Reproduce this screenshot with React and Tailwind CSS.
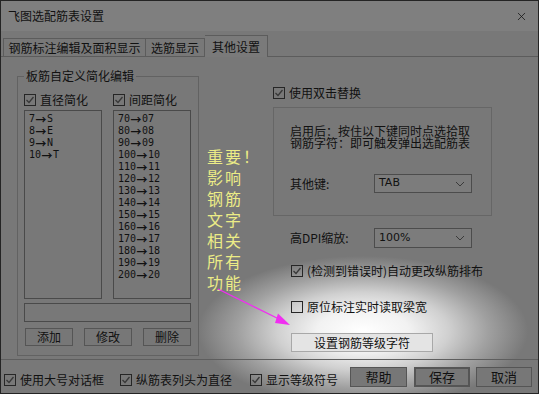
import { X } from "lucide-react";

const diaItems = [
  ["7", "S"],
  ["8", "E"],
  ["9", "N"],
  ["10", "T"],
];

const spaceItems = [
  ["70", "07"],
  ["80", "08"],
  ["90", "09"],
  ["100", "10"],
  ["110", "11"],
  ["120", "12"],
  ["130", "13"],
  ["140", "14"],
  ["150", "15"],
  ["160", "16"],
  ["170", "17"],
  ["180", "18"],
  ["190", "19"],
  ["200", "20"],
];

const hint = ["重要！", "影响", "钢筋", "文字", "相关", "所有", "功能"];

function Check({ checked = true, label, className = "" }) {
  return (
    <div className={`flex h-[14px] items-center gap-[4px] ${className}`}>
      <span className="flex h-[12px] w-[12px] shrink-0 items-center justify-center border border-[#262626]">
        {checked ? (
          <svg width="10" height="10" viewBox="0 0 10 10">
            <path d="M1.5 5 L4 7.5 L8.5 2" fill="none" stroke="#383838" strokeWidth="1.3" />
          </svg>
        ) : null}
      </span>
      <span className="whitespace-nowrap leading-[14px]">{label}</span>
    </div>
  );
}

function ListBox({ items }) {
  return (
    <div className="mt-[3px] h-[189px] border border-[#4a4a4a] pl-[4px] pt-[2px]">
      {items.map(([a, b]) => (
        <div
          key={a}
          className="flex h-[12px] items-center font-['DejaVu_Sans_Mono',monospace] text-[10px] leading-[12px]"
        >
          <span>{a}</span>
          <span className="w-[12px] text-center font-['Noto_Sans_CJK_SC',sans-serif] text-[11px] font-bold leading-[12px]">
            →
          </span>
          <span>{b}</span>
        </div>
      ))}
    </div>
  );
}

function Select({ value }) {
  return (
    <div className="flex h-full w-[98px] items-center justify-between border border-[#4c4c4c] bg-[#7c7c7c] pl-[4px] pr-[6px]">
      <span className="font-['DejaVu_Sans',sans-serif] text-[11px]">{value}</span>
      <svg width="10" height="6" viewBox="0 0 10 6">
        <path d="M1 1 L5 5 L9 1" fill="none" stroke="#3a3a3a" strokeWidth="1" />
      </svg>
    </div>
  );
}

function Btn({ children, className = "" }) {
  return (
    <div
      className={`flex items-center justify-center border border-[#555] bg-[#777] leading-none ${className}`}
    >
      {children}
    </div>
  );
}

export default function App() {
  return (
    <div className="relative flex h-[394px] w-[539px] flex-col overflow-hidden border border-[#242424] bg-[#787878] bg-[radial-gradient(ellipse_165px_75px_at_362px_330px,#ffffff_0%,#f2f2f2_28%,#d0d0d0_52%,#a0a0a0_76%,#787878_100%)] font-['Noto_Sans_CJK_SC',sans-serif] text-[12px] text-[#111]">
      <div className="flex h-[30px] items-center justify-between bg-[#7f7f7f] pl-[7px] pr-[10px]">
        <span>飞图选配筋表设置</span>
        <X size={13} strokeWidth={1.4} color="#111" />
      </div>

      <div className="flex h-[26px] items-end border-b border-[#5c5c5c] pl-[2px]">
        <div className="flex h-[18px] w-[143px] items-center justify-center border-l border-r border-t border-[#5c5c5c]">
          钢筋标注编辑及面积显示
        </div>
        <div className="flex h-[18px] w-[59px] items-center justify-center border-r border-t border-[#5c5c5c]">
          选筋显示
        </div>
        <div className="relative -mb-px flex h-[22px] w-[63px] items-center justify-center border-r border-t border-[#5c5c5c] bg-[#7a7a7a]">
          其他设置
        </div>
      </div>

      <div className="flex h-[303px] items-start border-b border-[#5e5e5e] pl-[16px] pt-[12px]">
        <fieldset className="h-[287px] w-[182px] border border-[#626262]">
          <legend className="ml-[6px] px-[2px] leading-[14px]">板筋自定义简化编辑</legend>
          <div className="mt-[10px] pl-[6px]">
            <div className="flex gap-[11px]">
              <div className="w-[78px]">
                <Check label="直径简化" />
                <ListBox items={diaItems} />
              </div>
              <div className="w-[78px]">
                <Check label="间距简化" />
                <ListBox items={spaceItems} />
              </div>
            </div>
            <div className="mt-[4px] h-[19px] w-[167px] border border-[#4a4a4a]" />
            <div className="mt-[6px] flex gap-[11px] pl-px">
              <Btn className="h-[18px] w-[48px]">添加</Btn>
              <Btn className="h-[18px] w-[48px]">修改</Btn>
              <Btn className="h-[18px] w-[48px]">删除</Btn>
            </div>
          </div>
        </fieldset>

        <div className="ml-[8px] mt-[77px] w-[66px] text-[16px] leading-[21px] tracking-[2px] text-[#ecec86]">
          {hint.map((line) => (
            <div key={line}>{line}</div>
          ))}
        </div>

        <div className="mt-[17px] w-[219px]">
          <Check label="使用双击替换" />
          <div className="mt-[7px] h-[109px] border border-[#666] pl-[16px] pt-[17px]">
            <div className="whitespace-nowrap leading-[12px]">
              <div>启用后：按住以下键同时点选拾取</div>
              <div>钢筋字符：即可触发弹出选配筋表</div>
            </div>
            <div className="mt-[25px] flex h-[19px] items-center">
              <span className="w-[84px]">其他键:</span>
              <Select value="TAB" />
            </div>
          </div>
          <div className="mt-[12px] flex h-[20px] items-center pl-[17px]">
            <span className="w-[84px]">高DPI缩放:</span>
            <Select value="100%" />
          </div>
          <Check className="ml-[18px] mt-[16px]" label="(检测到错误时)自动更改纵筋排布" />
          <Check className="ml-[18px] mt-[22px]" checked={false} label="原位标注实时读取梁宽" />
          <div className="ml-[18px] mt-[19px] flex h-[19px] w-[142px] items-center justify-center border border-[#a8a8a8] bg-[#e4e4e4]">
            设置钢筋等级字符
          </div>
        </div>
      </div>

      <div className="flex h-[33px] items-center pl-[3px] pr-[6px]">
        <Check className="mt-[6px] w-[116px]" label="使用大号对话框" />
        <Check className="mt-[6px] w-[130px]" label="纵筋表列头为直径" />
        <Check className="mt-[6px]" label="显示等级符号" />
        <div className="ml-auto flex items-center gap-[7px]">
          <Btn className="h-[20px] w-[57px] text-[13px]">帮助</Btn>
          <Btn className="h-[20px] w-[56px] border-2 border-[#1c4a73] text-[13px]">保存</Btn>
          <Btn className="-ml-px h-[20px] w-[56px] text-[13px]">取消</Btn>
        </div>
      </div>

      <svg className="pointer-events-none absolute inset-0" width="539" height="394">
        <line x1="217" y1="288" x2="280" y2="319" stroke="#f02ef0" strokeWidth="1.3" />
        <polygon points="289,324 277,312.5 274,322" fill="#f02ef0" />
      </svg>
    </div>
  );
}
